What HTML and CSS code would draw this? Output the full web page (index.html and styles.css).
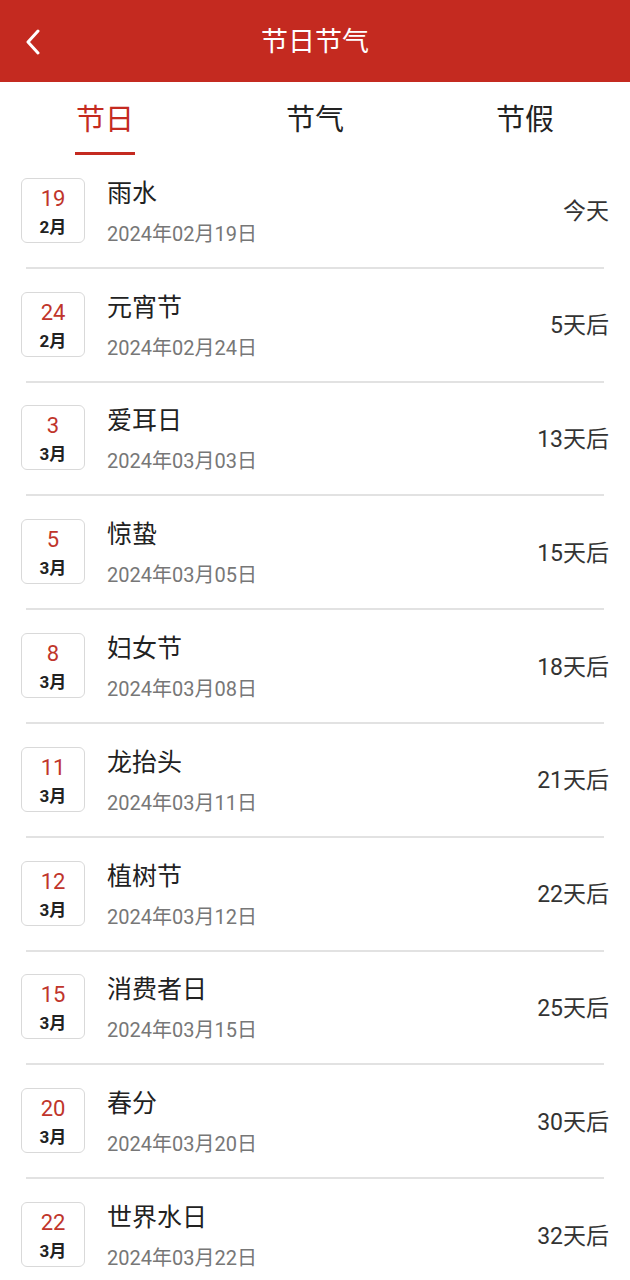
FILE: index.html
```html
<!DOCTYPE html>
<html lang="zh-CN">
<head>
    <meta charset="UTF-8">
    <meta name="viewport" content="width=device-width, initial-scale=1.0">
    <title>节日节气</title>
    <link rel="stylesheet" href="styles.css">
</head>
<body>

<div class="header">
    <span class="back">
        <svg width="16" height="26" viewBox="0 0 16 26"><path d="M13 2 L3 13 L13 24" fill="none" stroke="#fff" stroke-width="3" stroke-linecap="round" stroke-linejoin="round"/></svg>
    </span>
    <h1>节日节气</h1>
</div>

<!-- Tabs -->
<div class="tabs">
    <div class="tab active">节日</div>
    <div class="tab">节气</div>
    <div class="tab">节假</div>
</div>

<div class="list">
    <div class="item">
        <div class="datebox"><span class="day">19</span><span class="month">2月</span></div>
        <div class="info"><div class="name">雨水</div><div class="date">2024年02月19日</div></div>
        <div class="left">今天</div>
    </div>
    <div class="item">
        <div class="datebox"><span class="day">24</span><span class="month">2月</span></div>
        <div class="info"><div class="name">元宵节</div><div class="date">2024年02月24日</div></div>
        <div class="left">5天后</div>
    </div>
    <div class="item">
        <div class="datebox"><span class="day">3</span><span class="month">3月</span></div>
        <div class="info"><div class="name">爱耳日</div><div class="date">2024年03月03日</div></div>
        <div class="left">13天后</div>
    </div>
    <div class="item">
        <div class="datebox"><span class="day">5</span><span class="month">3月</span></div>
        <div class="info"><div class="name">惊蛰</div><div class="date">2024年03月05日</div></div>
        <div class="left">15天后</div>
    </div>
    <div class="item">
        <div class="datebox"><span class="day">8</span><span class="month">3月</span></div>
        <div class="info"><div class="name">妇女节</div><div class="date">2024年03月08日</div></div>
        <div class="left">18天后</div>
    </div>
    <div class="item">
        <div class="datebox"><span class="day">11</span><span class="month">3月</span></div>
        <div class="info"><div class="name">龙抬头</div><div class="date">2024年03月11日</div></div>
        <div class="left">21天后</div>
    </div>
    <div class="item">
        <div class="datebox"><span class="day">12</span><span class="month">3月</span></div>
        <div class="info"><div class="name">植树节</div><div class="date">2024年03月12日</div></div>
        <div class="left">22天后</div>
    </div>
    <div class="item">
        <div class="datebox"><span class="day">15</span><span class="month">3月</span></div>
        <div class="info"><div class="name">消费者日</div><div class="date">2024年03月15日</div></div>
        <div class="left">25天后</div>
    </div>
    <div class="item">
        <div class="datebox"><span class="day">20</span><span class="month">3月</span></div>
        <div class="info"><div class="name">春分</div><div class="date">2024年03月20日</div></div>
        <div class="left">30天后</div>
    </div>
    <div class="item">
        <div class="datebox"><span class="day">22</span><span class="month">3月</span></div>
        <div class="info"><div class="name">世界水日</div><div class="date">2024年03月22日</div></div>
        <div class="left">32天后</div>
    </div>
</div>

</body>
</html>
```

FILE: styles.css
```css
body {
    font-family: Roboto, "Noto Sans CJK SC", sans-serif;
    margin: 0;
    padding: 0;
    background: #fff;
    color: #222;
    width: 630px;
    height: 1280px;
    overflow: hidden;
}

.header {
    background: #c42a20;
    height: 82px;
    display: flex;
    align-items: center;
    justify-content: center;
    position: relative;
}

.header h1 {
    margin: 0;
    margin-top: 3px;
    font-size: 27px;
    font-weight: normal;
    color: #fff;
    line-height: 1;
}

.back {
    position: absolute;
    left: 25px;
    top: 29px;
    display: flex;
}

.tabs {
    display: flex;
    height: 73px;
}

.tab {
    flex: 1;
    display: flex;
    align-items: center;
    justify-content: center;
    font-size: 29px;
    color: #222;
    position: relative;
    padding-bottom: 4px;
}

.tab.active {
    color: #c42a20;
}

.tab.active::after {
    content: "";
    position: absolute;
    bottom: 0;
    left: 75px;
    width: 60px;
    height: 3px;
    background: #c42a20;
}

.item {
    display: flex;
    align-items: center;
    height: 112.8px;
    padding: 0 21px;
    position: relative;
}

.item::after {
    content: "";
    position: absolute;
    left: 26px;
    right: 26px;
    bottom: -1px;
    height: 2px;
    background: #e2e2e2;
}

.item + .item {
    margin-top: 1px;
}

.datebox {
    width: 62px;
    height: 63px;
    border: 1px solid #d9d9d9;
    border-radius: 6px;
    display: flex;
    flex-direction: column;
    align-items: center;
    margin-top: -2px;
}

.day {
    font-size: 22px;
    color: #c0352b;
    line-height: 24px;
    margin-top: 8px;
}

.month {
    font-size: 17px;
    font-weight: bold;
    color: #222;
    line-height: 20px;
    margin-top: 6px;
}

.info {
    flex: 1;
    margin-left: 22px;
    margin-top: 4px;
}

.name {
    font-size: 25px;
    line-height: 34px;
    color: #222;
    margin-top: -2px;
}

.date {
    font-size: 20px;
    line-height: 28px;
    color: #777;
    margin-top: 9px;
}

.left {
    font-size: 23px;
    color: #333;
    margin-top: -4px;
}
```
